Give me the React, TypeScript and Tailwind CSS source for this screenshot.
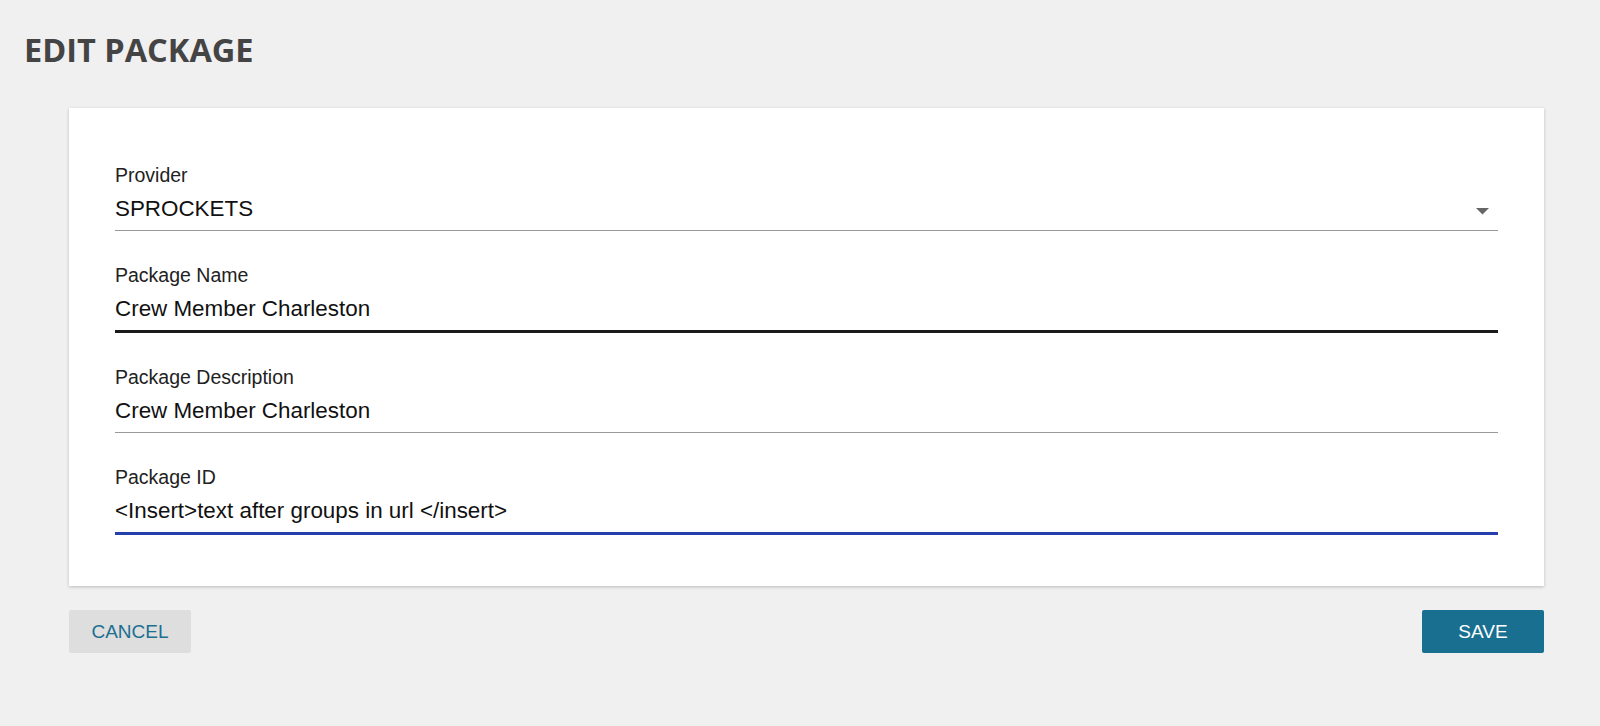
import React from "react";

type FieldProps = {
  label: string;
  value: string;
  line: string;
  select?: boolean;
};

function Field({ label, value, line, select }: FieldProps) {
  return (
    <div className="flex flex-col">
      <div className="text-[19.5px] leading-[22px] text-[#222]">{label}</div>
      <div className="mt-[10px] flex items-center justify-between pb-[8px]">
        <span className="text-[22.4px] leading-[26px] text-[#111]">{value}</span>
        {select && (
          <svg width="13" height="7" viewBox="0 0 13 7" className="mr-[9px] mt-[4px]">
            <path d="M0 0 L13 0 L6.5 6.5 Z" fill="#666" />
          </svg>
        )}
      </div>
      <div className={line} />
    </div>
  );
}

export default function App() {
  return (
    <div className="min-h-screen bg-[#f0f0f0] pb-[74px]">
      <h1
        className="pl-[24px] pt-[30px] text-[32.5px] font-bold leading-[40px] text-[#444]"
        style={{ fontFamily: '"Open Sans", "Noto Sans", sans-serif' }}
      >
        EDIT PACKAGE
      </h1>
      <div
        className="ml-[69px] mr-[56px] mt-[38px]"
        style={{ fontFamily: '"Liberation Sans", Arial, sans-serif' }}
      >
        <div className="flex flex-col gap-[33px] bg-white px-[46px] pb-[51px] pt-[56px] shadow-[0_1px_3px_rgba(0,0,0,0.22)]">
          <Field label="Provider" value="SPROCKETS" line="h-px bg-[#9a9a9a]" select />
          <Field label="Package Name" value="Crew Member Charleston" line="h-[3px] bg-[#1a1a1a]" />
          <Field label="Package Description" value="Crew Member Charleston" line="h-px bg-[#9a9a9a]" />
          <Field
            label="Package ID"
            value="<Insert>text after groups in url </insert>"
            line="h-[3px] bg-[#2540aa]"
          />
        </div>
        <div className="mt-[24px] flex items-center justify-between">
          <button className="h-[43px] w-[122px] rounded-[2px] bg-[#dedede] text-[19px] leading-[22px] text-[#1b6f91]">
            CANCEL
          </button>
          <button className="h-[43px] w-[122px] rounded-[2px] bg-[#186f90] text-[19px] leading-[22px] text-white">
            SAVE
          </button>
        </div>
      </div>
    </div>
  );
}
